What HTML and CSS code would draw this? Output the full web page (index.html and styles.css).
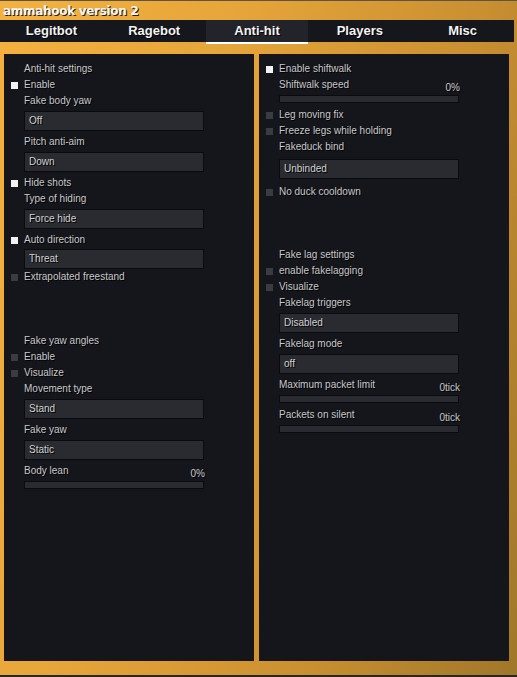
FILE: index.html
```html
<!DOCTYPE html>
<html lang="en">
<head>
  <meta charset="UTF-8">
  <title>ammahook version 2</title>
  <link rel="stylesheet" href="styles.css">
</head>
<body>
<div class="window">
  <div class="title">ammahook version 2</div>

  <div class="tabs">
    <div class="tab">Legitbot</div>
    <div class="tab">Ragebot</div>
    <div class="tab active">Anti-hit</div>
    <div class="tab">Players</div>
    <div class="tab">Misc</div>
  </div>

  <div class="panels">
    <div class="panel">
      <div class="label">Anti-hit settings</div>
      <div class="check on"><span class="box"></span>Enable</div>
      <div class="label">Fake body yaw</div>
      <div class="combo">Off</div>
      <div class="label">Pitch anti-aim</div>
      <div class="combo">Down</div>
      <div class="check on"><span class="box"></span>Hide shots</div>
      <div class="label">Type of hiding</div>
      <div class="combo">Force hide</div>
      <div class="check on"><span class="box"></span>Auto direction</div>
      <div class="combo tight">Threat</div>
      <div class="check"><span class="box"></span>Extrapolated freestand</div>

      <div class="spacer"></div>

      <div class="label">Fake yaw angles</div>
      <div class="check"><span class="box"></span>Enable</div>
      <div class="check"><span class="box"></span>Visualize</div>
      <div class="label">Movement type</div>
      <div class="combo">Stand</div>
      <div class="label">Fake yaw</div>
      <div class="combo">Static</div>
      <div class="slider-head"><span>Body lean</span><span class="value">0%</span></div>
      <div class="slider"></div>
    </div>

    <div class="panel">
      <div class="check on"><span class="box"></span>Enable shiftwalk</div>
      <div class="slider-head"><span>Shiftwalk speed</span><span class="value">0%</span></div>
      <div class="slider"></div>
      <div class="check"><span class="box"></span>Leg moving fix</div>
      <div class="check"><span class="box"></span>Freeze legs while holding</div>
      <div class="label">Fakeduck bind</div>
      <div class="combo bind">Unbinded</div>
      <div class="check"><span class="box"></span>No duck cooldown</div>

      <div class="spacer short"></div>

      <div class="label">Fake lag settings</div>
      <div class="check"><span class="box"></span>enable fakelagging</div>
      <div class="check"><span class="box"></span>Visualize</div>
      <div class="label">Fakelag triggers</div>
      <div class="combo">Disabled</div>
      <div class="label">Fakelag mode</div>
      <div class="combo">off</div>
      <div class="slider-head"><span>Maximum packet limit</span><span class="value">0tick</span></div>
      <div class="slider"></div>
      <div class="slider-head"><span>Packets on silent</span><span class="value">0tick</span></div>
      <div class="slider"></div>
    </div>
  </div>

  <div class="taskbar"></div>
</div>
</body>
</html>
```

FILE: styles.css
```css
:root {
  --panel-bg: #15161c;
  --panel-border: #1c140a;
  --field-bg: #2a2b31;
  --field-border: #0b0b0d;
  --text: #c9c9c9;
  --box-off: #3b3c42;
  --box-on: #f2f2f2;
}

* {
  margin: 0;
  padding: 0;
  box-sizing: border-box;
}

body {
  width: 517px;
  height: 677px;
  overflow: hidden;
  font-family: 'Liberation Sans', Arial, sans-serif;
  font-size: 10px;
  color: var(--text);
}

.window {
  width: 517px;
  height: 677px;
  display: flex;
  flex-direction: column;
  border-top: 1px solid #5b5448;
  background: linear-gradient(105deg, #f4b13f 0%, #e6a53a 35%, #c98f31 70%, #9f772a 100%);
}

.title {
  height: 19px;
  padding-left: 3px;
  line-height: 20px;
  font-family: 'DejaVu Sans', Verdana, sans-serif;
  font-weight: bold;
  font-size: 12px;
  letter-spacing: -0.3px;
  color: #f6f6f6;
  text-shadow: 1px 1px 0 #2b1c05;
}

.tabs {
  display: flex;
  width: 514px;
  height: 24px;
}

.tab {
  flex: 1;
  height: 24px;
  line-height: 22px;
  text-align: center;
  background: #16171d;
  background-clip: padding-box;
  border-bottom: 2px solid transparent;
  font-family: 'Liberation Sans', Arial, sans-serif;
  font-weight: bold;
  font-size: 13px;
  color: #f4f4f4;
  text-shadow: 1px 1px 0 #000;
}

.tab.active {
  background-color: #23242b;
  border-bottom-color: #ffffff;
}

.panels {
  display: flex;
  gap: 5px;
  padding: 10px 8px 0 4px;
}

.panel {
  width: 250px;
  height: 607px;
  padding: 6px 6px 0;
  background: var(--panel-bg);
  border: 1px solid var(--panel-border);
  display: flex;
  flex-direction: column;
}

.label,
.check,
.slider-head {
  height: 16px;
  line-height: 16px;
  white-space: nowrap;
  text-shadow: 1px 1px 0 #000;
}

.label {
  margin-left: 13px;
}

.check {
  display: flex;
  align-items: center;
  gap: 6px;
}

.check .box {
  width: 7px;
  height: 7px;
  background: var(--box-off);
  flex-shrink: 0;
}

.check.on .box {
  background: var(--box-on);
}

.combo {
  width: 180px;
  height: 20px;
  margin: 2px 0 3px 13px;
  padding-left: 4px;
  line-height: 18px;
  background: var(--field-bg);
  border: 1px solid var(--field-border);
  color: #d2d2d2;
  text-shadow: 1px 1px 0 #000;
}

.combo.tight {
  margin-top: 1px;
  margin-bottom: 0;
}

.combo.bind {
  margin-top: 4px;
  margin-bottom: 5px;
}

.slider-head {
  width: 181px;
  margin-left: 13px;
  display: flex;
  justify-content: space-between;
}

.slider-head .value {
  margin-top: 3px;
}

.slider {
  width: 180px;
  height: 8px;
  margin: 2px 0 4px 13px;
  background: var(--field-bg);
  border: 1px solid var(--field-border);
}

.spacer {
  height: 48px;
}

.spacer.short {
  height: 47px;
}

.taskbar {
  margin-top: auto;
  height: 2px;
  background: #2b2620;
}
```
